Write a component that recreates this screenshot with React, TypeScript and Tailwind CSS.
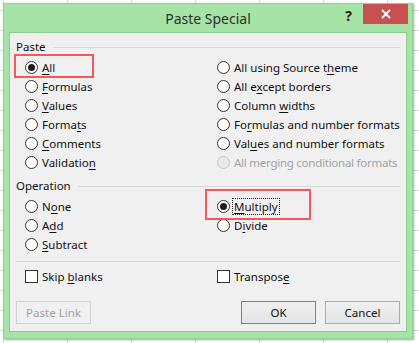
import React from "react";

type Parts = [string, string, string];

function Radio({ checked, disabled }: { checked?: boolean; disabled?: boolean }) {
  return (
    <span
      className={
        disabled
          ? "w-[13px] h-[13px] rounded-full border border-[#c4c4c4] bg-[#eaeaea] flex items-center justify-center shrink-0"
          : "w-[13px] h-[13px] rounded-full border border-[#333333] bg-white flex items-center justify-center shrink-0"
      }
    >
      {checked && <span className="w-[7px] h-[7px] rounded-full bg-[#1c1c1c]" />}
    </span>
  );
}

function Label({ p }: { p: Parts }) {
  return (
    <span className="whitespace-nowrap">
      {p[0]}
      {p[1] && <u className="underline-offset-[2px]">{p[1]}</u>}
      {p[2]}
    </span>
  );
}

function RadioRow({ p, checked, disabled, focus }: { p: Parts; checked?: boolean; disabled?: boolean; focus?: boolean }) {
  return (
    <div className={disabled ? "h-[19px] flex items-center gap-[4px] text-[#a3a3a3] tracking-[-0.25px]" : "h-[19px] flex items-center gap-[4px] text-[#111]"}>
      <Radio checked={checked} disabled={disabled} />
      {focus ? (
        <span className="-ml-[2px] border border-dotted border-[#222] px-[1px] leading-[15px]">
          <Label p={p} />
        </span>
      ) : (
        <Label p={p} />
      )}
    </div>
  );
}

function CheckRow({ p }: { p: Parts }) {
  return (
    <div className="h-[19px] flex items-center gap-[4px] text-[#111]">
      <span className="w-[13px] h-[13px] border border-[#333333] bg-white shrink-0" />
      <Label p={p} />
    </div>
  );
}

function Header({ text }: { text: string }) {
  return (
    <div className="h-[18px] flex items-center gap-[7px]">
      <span className="text-[#111]">{text}</span>
      <span className="flex-1 h-px bg-[#d8d8d8]" />
    </div>
  );
}

export default function App() {
  const pasteLeft: Parts[] = [
    ["", "A", "ll"],
    ["", "F", "ormulas"],
    ["", "V", "alues"],
    ["Forma", "t", "s"],
    ["", "C", "omments"],
    ["Validatio", "n", ""],
  ];
  const pasteRight: Parts[] = [
    ["All using Source t", "h", "eme"],
    ["All e", "x", "cept borders"],
    ["Column ", "w", "idths"],
    ["Fo", "r", "mulas and number formats"],
    ["Val", "u", "es and number formats"],
  ];

  return (
    <div className="w-[419px] h-[343px] overflow-hidden bg-white bg-[linear-gradient(to_right,#dadada_1px,transparent_1px),linear-gradient(to_bottom,#dadada_1px,transparent_1px)] bg-[size:64px_20px] bg-[position:3px_10px] pt-[3px] pl-[3px] font-['Noto_Sans','DejaVu_Sans',sans-serif] text-[11.5px]">
      <div className="w-[410px] h-[336px] bg-[#a6e3a6] border border-[#93d293] px-[5px] shadow-[1px_1px_2px_rgba(0,0,0,0.35)] flex flex-col">
        {/* title bar */}
        <div className="h-[28px] grid grid-cols-[1fr_auto_1fr] -mx-[5px]">
          <div />
          <div className="flex items-center text-[14px] text-[#2e2e2e] pt-[1px]">Paste Special</div>
          <div className="flex justify-end items-start pr-[4px]">
            <span className="mt-[3px] mr-[11px] text-[14px] font-bold text-[#222] leading-[18px]">?</span>
            <button className="w-[45px] h-[20px] bg-[#c75050] flex items-center justify-center">
              <svg width="10" height="10" viewBox="0 0 10 10">
                <path d="M1 1 L9 9 M9 1 L1 9" stroke="#ffffff" strokeWidth="1.8" />
              </svg>
            </button>
          </div>
        </div>

        {/* client */}
        <div className="relative h-[300px] bg-[#f0f0f0] border border-[#8fcd8f] pt-[5px] px-[6px] flex flex-col">
          <Header text="Paste" />
          <div className="mt-[2px] pl-[9px] flex">
            <div className="w-[192px] shrink-0 flex flex-col">
              {pasteLeft.map((p, i) => (
                <RadioRow key={i} p={p} checked={i === 0} />
              ))}
            </div>
            <div className="flex flex-col">
              {pasteRight.map((p, i) => (
                <RadioRow key={i} p={p} />
              ))}
              <RadioRow p={["All merging conditional formats", "", ""]} disabled />
            </div>
          </div>

          <div className="mt-[5px]">
            <Header text="Operation" />
          </div>
          <div className="mt-[2px] pl-[9px] flex">
            <div className="w-[192px] shrink-0 flex flex-col">
              <RadioRow p={["N", "o", "ne"]} />
              <RadioRow p={["A", "d", "d"]} />
              <RadioRow p={["", "S", "ubtract"]} />
            </div>
            <div className="flex flex-col">
              <RadioRow p={["", "M", "ultiply"]} checked focus />
              <RadioRow p={["D", "i", "vide"]} />
            </div>
          </div>

          <div className="mt-[7px] h-px bg-[#d8d8d8]" />

          <div className="mt-[5px] pl-[9px] flex">
            <div className="w-[192px] shrink-0">
              <CheckRow p={["Skip ", "b", "lanks"]} />
            </div>
            <CheckRow p={["Transpos", "e", ""]} />
          </div>

          <div className="mt-[15px] flex items-center text-[11.5px]">
            <button className="w-[75px] h-[23px] border border-[#d2d2d2] bg-[#f0f0f0] text-[#a3a3a3]">Paste Link</button>
            <div className="flex-1" />
            <button className="w-[75px] h-[23px] border border-[#3c93e6] bg-[linear-gradient(#f0f0f0,#e4e4e4)] text-[#111]">OK</button>
            <button className="ml-[9px] w-[75px] h-[23px] border border-[#acacac] bg-[linear-gradient(#f0f0f0,#e4e4e4)] text-[#111]">Cancel</button>
          </div>

          {/* red annotation boxes */}
          <div className="absolute left-[4px] top-[21px] w-[80px] h-[24px] border-2 border-[#f5585b]" />
          <div className="absolute left-[195px] top-[156px] w-[106px] h-[31px] border-2 border-[#f5585b]" />
        </div>
      </div>
    </div>
  );
}
